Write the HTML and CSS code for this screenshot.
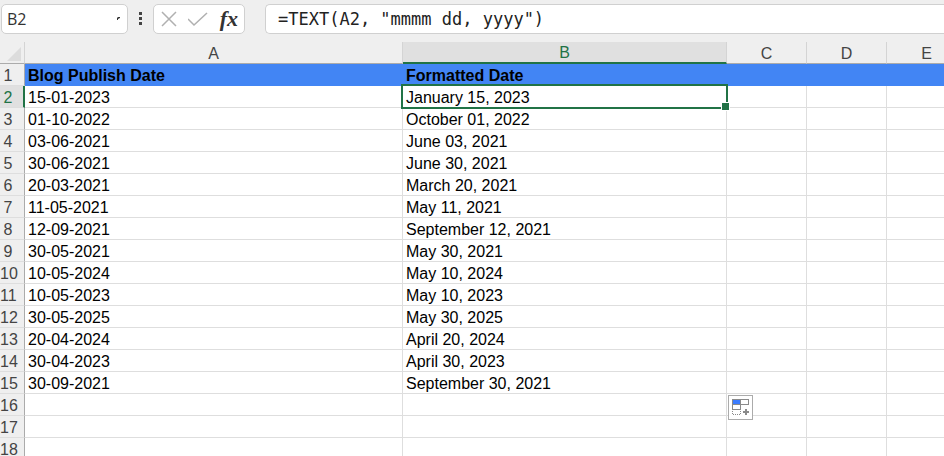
FILE: index.html
```html
<!DOCTYPE html>
<html lang="en">
<head>
<meta charset="UTF-8">
<meta name="viewport" content="width=device-width, initial-scale=1.0">
<title>Blog Publish Date</title>
<link rel="stylesheet" href="styles.css">
</head>
<body>
<!-- Formula bar -->
<div class="formula-bar">
  <div class="name-box">
    <input type="text" class="name-input" aria-label="Name box" value="B2">
    <svg class="name-arrow" width="4" height="4" viewBox="0 0 4 4"><path d="M0 1 L1 0 H3 V1 L1 2 V3 H0 Z" fill="#333"/></svg>
  </div>
  <svg class="dots" width="4" height="14" viewBox="0 0 4 14" fill="#444">
    <rect x="0" y="0" width="3" height="3"/>
    <rect x="0" y="5" width="3" height="3"/>
    <rect x="0" y="10" width="3" height="3"/>
  </svg>
  <div class="actions">
    <button type="button" class="action" aria-label="Cancel">
      <svg width="16" height="16" viewBox="0 0 16 16"><path d="M1 1 L15 15 M15 1 L1 15" stroke="#b0b0b0" stroke-width="1.5" fill="none"/></svg>
    </button>
    <button type="button" class="action" aria-label="Enter">
      <svg width="20" height="16" viewBox="0 0 20 16"><path d="M0 8 L6 14 L19 2" stroke="#b0b0b0" stroke-width="1.5" fill="none"/></svg>
    </button>
    <button type="button" class="action action-fx" aria-label="Insert function">fx</button>
  </div>
  <input type="text" class="formula-input" aria-label="Formula" value="=TEXT(A2, &quot;mmmm dd, yyyy&quot;)">
</div>

<!-- Sheet -->
<div class="sheet">
  <table class="grid">
    <colgroup>
      <col class="col-num">
      <col class="col-a">
      <col class="col-b">
      <col class="col-small">
      <col class="col-small">
      <col class="col-small">
    </colgroup>
    <thead>
      <tr>
        <th class="corner"><svg width="14" height="14" viewBox="0 0 14 14"><path d="M14 0 V14 H0 Z" fill="#dcdcdc"/></svg></th>
        <th>A</th>
        <th class="active">B</th>
        <th>C</th>
        <th>D</th>
        <th>E</th>
      </tr>
    </thead>
    <tbody>
      <tr class="title-row"><th>1</th><td>Blog Publish Date</td><td>Formatted Date</td><td></td><td></td><td></td></tr>
      <tr><th class="active">2</th><td>15-01-2023</td><td class="selected">January 15, 2023</td><td></td><td></td><td></td></tr>
      <tr><th>3</th><td>01-10-2022</td><td>October 01, 2022</td><td></td><td></td><td></td></tr>
      <tr><th>4</th><td>03-06-2021</td><td>June 03, 2021</td><td></td><td></td><td></td></tr>
      <tr><th>5</th><td>30-06-2021</td><td>June 30, 2021</td><td></td><td></td><td></td></tr>
      <tr><th>6</th><td>20-03-2021</td><td>March 20, 2021</td><td></td><td></td><td></td></tr>
      <tr><th>7</th><td>11-05-2021</td><td>May 11, 2021</td><td></td><td></td><td></td></tr>
      <tr><th>8</th><td>12-09-2021</td><td>September 12, 2021</td><td></td><td></td><td></td></tr>
      <tr><th>9</th><td>30-05-2021</td><td>May 30, 2021</td><td></td><td></td><td></td></tr>
      <tr><th>10</th><td>10-05-2024</td><td>May 10, 2024</td><td></td><td></td><td></td></tr>
      <tr><th>11</th><td>10-05-2023</td><td>May 10, 2023</td><td></td><td></td><td></td></tr>
      <tr><th>12</th><td>30-05-2025</td><td>May 30, 2025</td><td></td><td></td><td></td></tr>
      <tr><th>13</th><td>20-04-2024</td><td>April 20, 2024</td><td></td><td></td><td></td></tr>
      <tr><th>14</th><td>30-04-2023</td><td>April 30, 2023</td><td></td><td></td><td></td></tr>
      <tr><th>15</th><td>30-09-2021</td><td>September 30, 2021</td><td></td><td></td><td></td></tr>
      <tr>
        <th>16</th><td></td><td></td>
        <td class="fill-cell">
          <button type="button" class="fill-options" aria-label="Auto fill options">
            <svg width="17" height="17" viewBox="0 0 17 17">
              <rect x="0.5" y="0.5" width="8" height="5" fill="#3b7cff" stroke="#8a8a8a"/>
              <rect x="8.5" y="0.5" width="8" height="5" fill="#fff" stroke="#8a8a8a"/>
              <rect x="0.5" y="5.5" width="8" height="5" fill="#fff" stroke="#8a8a8a"/>
              <path d="M0.5 12 V15.5 H8.5 V12" fill="none" stroke="#8a8a8a" stroke-dasharray="1 1"/>
              <path d="M11 13 H17 M14 10 V16" stroke="#8a8a8a" stroke-width="2"/>
            </svg>
          </button>
        </td>
        <td></td><td></td>
      </tr>
      <tr><th>17</th><td></td><td></td><td></td><td></td><td></td></tr>
      <tr><th>18</th><td></td><td></td><td></td><td></td><td></td></tr>
    </tbody>
  </table>
</div>
</body>
</html>
```

FILE: styles.css
```css
* {
  box-sizing: border-box;
}
body {
  margin: 0;
  height: 100vh;
  overflow: hidden;
  display: flex;
  flex-direction: column;
  background-color: #fff;
  font-family: "Liberation Sans", Arial, sans-serif;
  font-size: 16px;
}

/* Formula bar */
.formula-bar {
  display: flex;
  align-items: center;
  flex-shrink: 0;
  height: 42px;
  padding: 4px 0 8px 1px;
  background-color: #efefef;
}
.name-box,
.actions,
.formula-input {
  height: 30px;
  border: 1px solid #d0d0d0;
  border-radius: 5px;
  background-color: #fff;
}
.name-box {
  display: flex;
  align-items: center;
  width: 127px;
  padding: 0 6px 0 5px;
}
.name-input {
  flex: 1;
  min-width: 0;
  padding: 0;
  border: 0;
  outline: 0;
  background: none;
  color: #333;
  font: 16px "Open Sans", sans-serif;
}
.dots {
  margin: 0 10px 0 11px;
}
.actions {
  display: flex;
  align-items: center;
  justify-content: space-between;
  width: 92px;
  margin-right: 20px;
  padding: 0 6px 0 7px;
}
.action {
  display: flex;
  padding: 0;
  border: 0;
  background: none;
}
.action-fx {
  color: #333;
  font: italic bold 22px/26px "Liberation Serif", serif;
}
.formula-input {
  flex: 1;
  min-width: 0;
  padding: 0 12px;
  border-right: 0;
  border-radius: 5px 0 0 5px;
  outline: 0;
  color: #222;
  font: 17px "DejaVu Sans Mono", monospace;
}

/* Sheet */
.sheet {
  flex: 1;
  overflow: hidden;
}
.grid {
  width: 967px;
  table-layout: fixed;
  border-collapse: separate;
  border-spacing: 0;
}
.col-num {
  width: 25px;
}
.col-a {
  width: 378px;
}
.col-b {
  width: 324px;
}
.col-small {
  width: 80px;
}
.grid th,
.grid td {
  height: 22px;
  padding: 2px 0 0;
  line-height: 19px;
  border-right: 1px solid #dedede;
  border-bottom: 1px solid #dedede;
  white-space: nowrap;
}
.grid td {
  padding-left: 3px;
  color: #000;
}
.grid th {
  background-color: #efefef;
  color: #444;
  font-weight: normal;
}
.grid thead th {
  border-right-color: #d4d4d4;
  border-bottom-color: #ababab;
}
.grid tbody th {
  padding-right: 8px;
  border-right-color: #ababab;
}
.grid .corner {
  padding-right: 3px;
}
.corner svg {
  display: block;
  margin-left: auto;
}
.grid thead .active {
  background-color: #e0e0e0;
  border-bottom: 2px solid #217346;
  color: #217346;
  line-height: 18px;
}
.grid tbody .active {
  padding-right: 7px;
  background-color: #e0e0e0;
  border-right: 2px solid #217346;
  color: #217346;
}
.grid .title-row td {
  background-color: #4285f4;
  border-color: #4285f4;
  font-weight: bold;
}

/* Selected cell with its fill handle */
.selected {
  position: relative;
}
.selected::before {
  content: "";
  position: absolute;
  top: -2px;
  right: -2px;
  bottom: -2px;
  left: -2px;
  border: 2px solid #217346;
}
.selected::after {
  content: "";
  position: absolute;
  right: -4px;
  bottom: -4px;
  width: 7px;
  height: 7px;
  border: 1px solid #fff;
  background-color: #217346;
}

/* Auto fill button floats over the cells below */
.fill-cell {
  position: relative;
}
.fill-options {
  position: absolute;
  top: 1px;
  left: 1px;
  display: flex;
  align-items: center;
  justify-content: center;
  width: 25px;
  height: 25px;
  padding: 0;
  border: 1px solid #ababab;
  background-color: #fff;
}
```
